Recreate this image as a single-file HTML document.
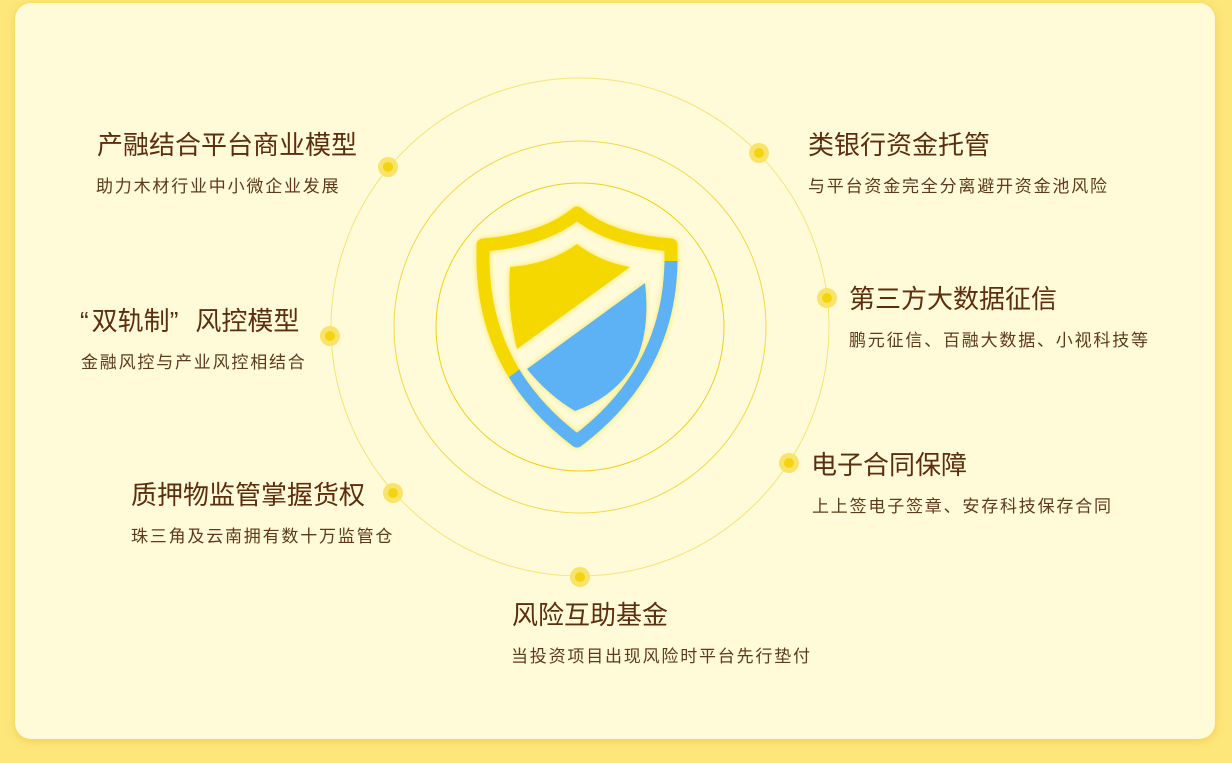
<!DOCTYPE html>
<html><head><meta charset="utf-8"><style>
body{margin:0;width:1232px;height:763px;background:#fde67a;overflow:hidden;position:relative;font-family:"Liberation Sans","Noto Sans CJK SC",sans-serif}
.card{position:absolute;left:15px;top:3px;width:1200px;height:736px;background:#fffbd8;border-radius:16px;box-shadow:0 2px 8px rgba(230,190,40,.5)}
.t{position:absolute;font-size:26px;line-height:30px;color:#5b2e0e;white-space:nowrap}
.s{position:absolute;font-size:17px;line-height:22px;letter-spacing:1.8px;color:#5e3a1c;white-space:nowrap}
svg{position:absolute;left:0;top:0}
</style></head><body>
<div class="card"></div>
<svg width="1232" height="763">
<defs><filter id="g" x="-20%" y="-20%" width="140%" height="140%"><feDropShadow dx="0" dy="0" stdDeviation="3" flood-color="#f2d500" flood-opacity=".6"/></filter>
<clipPath id="cb"><polygon points="663,261 710,261 710,490 440,490 440,385 508,378"/></clipPath></defs>
<circle cx="580" cy="327" r="249" fill="none" stroke="#f7e37a" stroke-width="1"/>
<circle cx="580" cy="327" r="186" fill="none" stroke="#f5d84a" stroke-width="1"/>
<circle cx="580" cy="327" r="144" fill="none" stroke="#f2d018" stroke-width="1"/>
<g fill="#f9e36a"><circle cx="388" cy="167" r="10"/><circle cx="759" cy="153" r="10"/><circle cx="330" cy="336" r="10"/><circle cx="827" cy="298" r="10"/><circle cx="393" cy="493" r="10"/><circle cx="789" cy="463" r="10"/><circle cx="580" cy="577" r="10"/></g>
<g fill="#f3d411"><circle cx="388" cy="167" r="5"/><circle cx="759" cy="153" r="5"/><circle cx="330" cy="336" r="5"/><circle cx="827" cy="298" r="5"/><circle cx="393" cy="493" r="5"/><circle cx="789" cy="463" r="5"/><circle cx="580" cy="577" r="5"/></g>
<g filter="url(#g)">
<path d="M577,213 Q545,240 483,245 L483,262 Q485,372 577,441 Q669,372 671,262 L671,245 Q609,240 577,213 Z" fill="none" stroke="#f4d800" stroke-width="13" stroke-linejoin="round"/>
<path d="M577,213 Q545,240 483,245 L483,262 Q485,372 577,441 Q669,372 671,262 L671,245 Q609,240 577,213 Z" fill="none" stroke="#5db2f5" stroke-width="13" stroke-linejoin="round" clip-path="url(#cb)"/>
<path d="M510,267 Q550,264 577,244 Q600,262 630,267 L517,349 Q507,310 510,267 Z" fill="#f4d800"/>
<path d="M645,283 Q650,325 638,356 Q620,395 575,411 Q548,395 527,369 Z" fill="#5db2f5"/>
</g>
</svg>
<div class="t" style="left:97px;top:130px">产融结合平台商业模型</div>
<div class="s" style="left:96px;top:176px">助力木材行业中小微企业发展</div>
<div class="t" style="left:808px;top:130px">类银行资金托管</div>
<div class="s" style="left:808px;top:176px">与平台资金完全分离避开资金池风险</div>
<div class="t" style="left:80px;top:306px"><span style="margin-right:3px">“</span>双轨制<span style="margin-right:17px">”</span>风控模型</div>
<div class="s" style="left:81px;top:352px">金融风控与产业风控相结合</div>
<div class="t" style="left:849px;top:284px">第三方大数据征信</div>
<div class="s" style="left:849px;top:330px">鹏元征信、百融大数据、小视科技等</div>
<div class="t" style="left:131px;top:480px">质押物监管掌握货权</div>
<div class="s" style="left:131px;top:526px">珠三角及云南拥有数十万监管仓</div>
<div class="t" style="left:811px;top:450px">电子合同保障</div>
<div class="s" style="left:812px;top:496px">上上签电子签章、安存科技保存合同</div>
<div class="t" style="left:512px;top:600px">风险互助基金</div>
<div class="s" style="left:511px;top:646px">当投资项目出现风险时平台先行垫付</div>
</body></html>
